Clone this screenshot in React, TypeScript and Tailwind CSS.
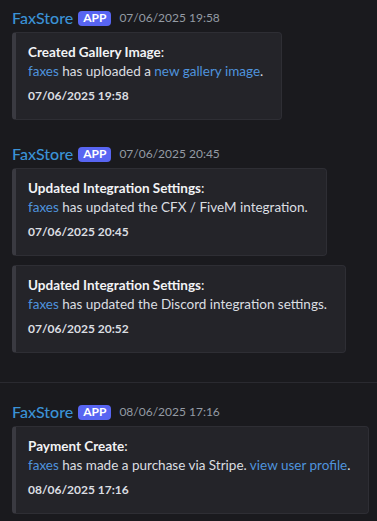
import React from "react";

type Part = { text: string; link?: boolean };

type Embed = {
  title: string;
  parts: Part[];
  footer: string;
};

type Message = {
  time: string;
  embeds: Embed[];
};

const groups: Message[][] = [
  [
    {
      time: "07/06/2025 19:58",
      embeds: [
        {
          title: "Created Gallery Image",
          parts: [
            { text: "faxes", link: true },
            { text: " has uploaded a " },
            { text: "new gallery image", link: true },
            { text: "." },
          ],
          footer: "07/06/2025 19:58",
        },
      ],
    },
    {
      time: "07/06/2025 20:45",
      embeds: [
        {
          title: "Updated Integration Settings",
          parts: [
            { text: "faxes", link: true },
            { text: " has updated the CFX / FiveM integration." },
          ],
          footer: "07/06/2025 20:45",
        },
        {
          title: "Updated Integration Settings",
          parts: [
            { text: "faxes", link: true },
            { text: " has updated the Discord integration settings." },
          ],
          footer: "07/06/2025 20:52",
        },
      ],
    },
  ],
  [
    {
      time: "08/06/2025 17:16",
      embeds: [
        {
          title: "Payment Create",
          parts: [
            { text: "faxes", link: true },
            { text: " has made a purchase via Stripe. " },
            { text: "view user profile", link: true },
            { text: "." },
          ],
          footer: "08/06/2025 17:16",
        },
      ],
    },
  ],
];

const EmbedCard = ({ embed }: { embed: Embed }) => (
  <div className="w-fit rounded-[4px] border border-[#2e2e34] border-l-4 border-l-[#3a3a41] bg-[#242429] pb-[15px] pl-3 pr-[18px] pt-[10px]">
    <div className="text-[13.5px] leading-[18px] text-[#f2f3f5]">
      <span className="font-bold">{embed.title}</span>:
    </div>
    <div className="mt-[1px] whitespace-nowrap text-[13.5px] leading-[18px] text-[#dbdee1]">
      {embed.parts.map((p, i) =>
        p.link ? (
          <span key={i} className="text-[#4f93dd]">
            {p.text}
          </span>
        ) : (
          <span key={i}>{p.text}</span>
        )
      )}
    </div>
    <div className="mt-[8px] text-[12px] font-bold leading-[16px] text-[#dbdee1]">
      {embed.footer}
    </div>
  </div>
);

const MessageBlock = ({ msg }: { msg: Message }) => (
  <div className="px-3">
    <div className="flex h-[22px] items-center">
      <span className="text-[16px] font-medium leading-[22px] text-[#3b92d6]">
        FaxStore
      </span>
      <span className="ml-[5px] flex h-[15px] items-center rounded-[4px] bg-[#5865f2] px-[5px] text-[12px] font-bold leading-none text-white">
        APP
      </span>
      <span className="ml-[8px] text-[12px] leading-[22px] text-[#949ba4]">
        {msg.time}
      </span>
    </div>
    <div className="mt-[3px] flex flex-col gap-[9px]">
      {msg.embeds.map((e, i) => (
        <EmbedCard key={i} embed={e} />
      ))}
    </div>
  </div>
);

export default function App() {
  return (
    <div
      className="h-[521px] w-[377px] overflow-hidden bg-[#1a1a1e]"
      style={{ fontFamily: "Lato, 'Noto Sans', sans-serif" }}
    >
      <div className="flex flex-col gap-[23px] pt-[7px]">
        {groups[0].map((m, i) => (
          <MessageBlock key={i} msg={m} />
        ))}
      </div>
      <div className="mt-[29px] h-px w-full bg-[#2a2a30]" />
      <div className="flex flex-col pt-[18px]">
        {groups[1].map((m, i) => (
          <MessageBlock key={i} msg={m} />
        ))}
      </div>
    </div>
  );
}
